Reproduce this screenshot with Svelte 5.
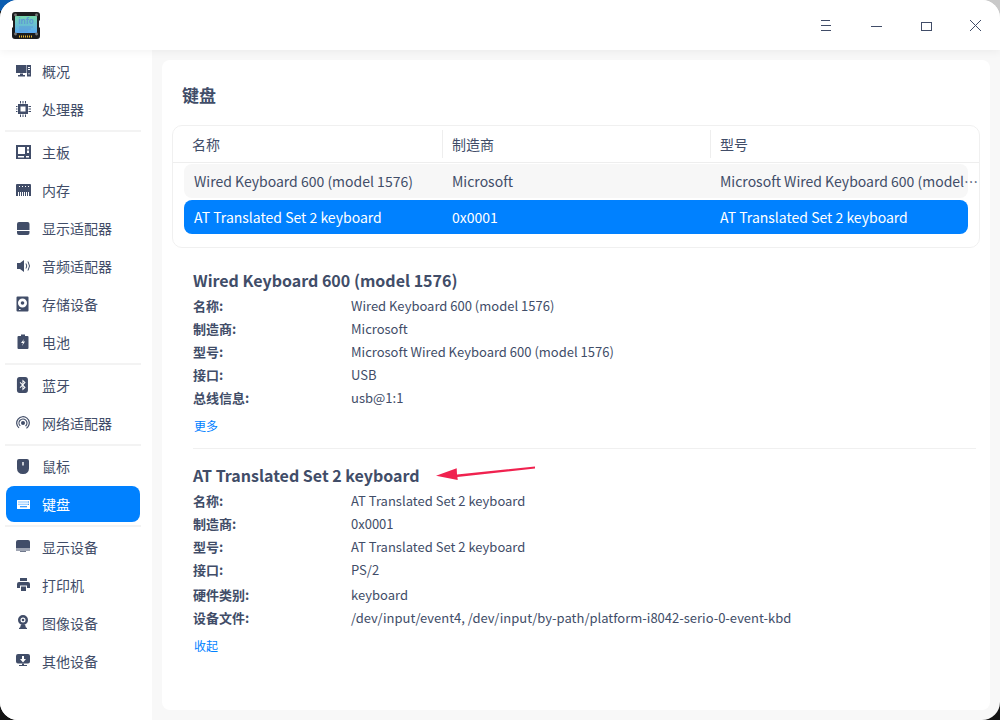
<script>
  const groups = [
    [['overview','概况'],['cpu','处理器']],
    [['board','主板'],['mem','内存'],['gpu','显示适配器'],['audio','音频适配器'],['disk','存储设备'],['battery','电池']],
    [['bt','蓝牙'],['net','网络适配器']],
    [['mouse','鼠标'],['kbd','键盘']],
    [['monitor','显示设备'],['printer','打印机'],['cam','图像设备'],['other','其他设备']]
  ];
  const rows = [
    ['Wired Keyboard 600 (model 1576)','Microsoft','Microsoft Wired Keyboard 600 (model 1576)'],
    ['AT Translated Set 2 keyboard','0x0001','AT Translated Set 2 keyboard']
  ];
  const devices = [
    { title:'Wired Keyboard 600 (model 1576)', link:'更多', fields:[
      ['名称:','Wired Keyboard 600 (model 1576)'],['制造商:','Microsoft'],['型号:','Microsoft Wired Keyboard 600 (model 1576)'],['接口:','USB'],['总线信息:','usb@1:1']]},
    { title:'AT Translated Set 2 keyboard', link:'收起', fields:[
      ['名称:','AT Translated Set 2 keyboard'],['制造商:','0x0001'],['型号:','AT Translated Set 2 keyboard'],['接口:','PS/2'],['硬件类别:','keyboard'],['设备文件:','/dev/input/event4, /dev/input/by-path/platform-i8042-serio-0-event-kbd']]}
  ];
</script>

<div class="desk">
  <div class="win">
    <header class="bar">
      <svg class="logo" width="28" height="28" viewBox="0 0 28 28">
        <defs><linearGradient id="lg" x1="0" y1="0" x2="0" y2="1"><stop offset="0" stop-color="#79d8ac"/><stop offset="1" stop-color="#5aa8f2"/></linearGradient></defs>
        <path d="M3 1h22a3 3 0 0 1 3 3v5l-1 1v6l1 1v8a3 3 0 0 1-3 3H3a3 3 0 0 1-3-3v-8l1-1v-6L0 9V4a3 3 0 0 1 3-3z" fill="#1c1c1e"/>
        <rect x="3" y="5" width="22" height="17" fill="url(#lg)"/>
        <circle cx="3.500" cy="4" r="1.400" fill="#777"/><circle cx="24.500" cy="4" r="1.400" fill="#777"/><circle cx="3.500" cy="23" r="1.400" fill="#777"/><circle cx="24.500" cy="23" r="1.400" fill="#777"/>
        <text x="14" y="13" text-anchor="middle" class="logotext">info</text>
        <path d="M7 16h14M7 18h12M7 20h9" stroke="#5d9ad6" stroke-width="1"/>
        <path d="M7 25.500h14" stroke="#e6b52e" stroke-width="2" stroke-dasharray="1 1"/>
      </svg>
      <div class="winbtns">
        <svg width="50" height="50" viewBox="0 0 50 50"><path d="M21 20.500h9M21 25.500h10M21 30.500h10" stroke="#414d68" stroke-width="1"/></svg>
        <svg width="50" height="50" viewBox="0 0 50 50"><path d="M21 26.500h11" stroke="#414d68" stroke-width="1"/></svg>
        <svg width="50" height="50" viewBox="0 0 50 50"><rect x="21.500" y="22.500" width="10" height="8" fill="none" stroke="#414d68" stroke-width="1"/></svg>
        <svg width="50" height="50" viewBox="0 0 50 50"><path d="M20 20l11 11M31 20l-11 11" stroke="#414d68" stroke-width="1"/></svg>
      </div>
    </header>
    <div class="main">
      <nav class="side">
        {#each groups as g, i}
          {#if i>0}<div class="sep"></div>{/if}
          {#each g as it}
            <div class="item" class:active={it[0]==='kbd'}>
              <svg class="ic" width="16" height="16" viewBox="0 0 16 16" fill="currentColor">
                {#if it[0]==='overview'}
                  <path fill-rule="evenodd" d="M0 2h10.500v8H0zM4 10.500h3V12H4zM2 12h7v1.500H2zM11 2h4v11.500h-4zM12 4v1h2V4zM12 6v1h2V6zM12.500 10v1.500h1V10z"/>
                {:else if it[0]==='cpu'}
                  <g transform="translate(-1 0)"><path fill-rule="evenodd" d="M3 3h10v10H3zM5.500 5.500v5h5v-5z"/><path d="M0 5h2.500v1H0zM0 7.500h2.500v1H0zM0 10h2.500v1H0zM13.500 5H16v1h-2.500zM13.500 7.500H16v1h-2.500zM13.500 10H16v1h-2.500zM5 0h1v2.500H5zM7.500 0h1v2.500h-1zM10 0h1v2.500h-1zM5 13.500h1V16H5zM7.500 13.500h1V16h-1zM10 13.500h1V16h-1z"/></g>
                {:else if it[0]==='board'}
                  <path fill-rule="evenodd" d="M0 1h15v14H0zM2 3v7h7V3zM11 3v2.500h2V3zM11 6.500V9h2V6.500zM2 12v1.500h6V12zM10 12v1.500h3V12z"/>
                {:else if it[0]==='mem'}
                  <path fill-rule="evenodd" d="M1 2h13a1 1 0 0 1 1 1v11H0V3a1 1 0 0 1 1-1zM3 4v1h1V4zM6 4v1h1V4zM9 4v1h1V4zM12 4v1h1V4zM2 10v4h1v-4zM4 10v4h1v-4zM6 10v4h1v-4zM8 10v4h1v-4zM10 10v4h1v-4zM12 10v4h1v-4z"/>
                {:else if it[0]==='gpu'}
                  <path d="M3 2h8.500a2 2 0 0 1 2 2v6H1V4a2 2 0 0 1 2-2zM1 11h12.500v2a2 2 0 0 1-2 2H3a2 2 0 0 1-2-2z"/>
                {:else if it[0]==='audio'}
                  <path d="M1 5h3l4-3v12l-4-3H1z"/><path d="M10 5.500q1.500 2.500 0 5M12 3.500q3 4.500 0 9" fill="none" stroke="currentColor" stroke-width="1"/>
                {:else if it[0]==='disk'}
                  <path fill-rule="evenodd" d="M1.500 0.500h10a1 1 0 0 1 1 1v13a1 1 0 0 1-1 1h-10a1 1 0 0 1-1-1v-13a1 1 0 0 1 1-1zM6.500 2.500a4.500 4.500 0 1 0 0 9 4.500 4.500 0 0 0 0-9zM3 13v1h1.500v-1z"/><circle cx="6.500" cy="7" r="1.800"/>
                {:else if it[0]==='battery'}
                  <path fill-rule="evenodd" d="M5 0.500h4V2h2.500a1 1 0 0 1 1 1v11a1 1 0 0 1-1 1h-9a1 1 0 0 1-1-1V3a1 1 0 0 1 1-1H5zM8 5L5 9h2l-1 3 3-4.500H7z"/>
                {:else if it[0]==='bt'}
                  <path fill-rule="evenodd" transform="scale(.92 1)" d="M4 0h6a3 3 0 0 1 3 3v10a3 3 0 0 1-3 3H4a3 3 0 0 1-3-3V3a3 3 0 0 1 3-3zM7 2.500V7L4.700 5 4 5.700 6.500 8 4 10.300l.7.700L7 9v4.500l3.500-3L8 8l2.500-2.500zM8 5V4.800L9 5.500 8 6.500zM8 9.500l1 1-1 .8z"/>
                {:else if it[0]==='net'}
                  <circle cx="7" cy="8" r="2"/><circle cx="7" cy="8" r="4" fill="none" stroke="currentColor" stroke-width="1.200" stroke-dasharray="19 6" transform="rotate(133 7 8)"/><circle cx="7" cy="8" r="6.300" fill="none" stroke="currentColor" stroke-width="1.200" stroke-dasharray="31 8.600" transform="rotate(129 7 8)"/>
                {:else if it[0]==='mouse'}
                  <path fill-rule="evenodd" d="M3 1h8a2 2 0 0 1 2 2v7.500a5.500 5.500 0 0 1-5.500 5.500h-1A5.500 5.500 0 0 1 1 10.500V3a2 2 0 0 1 2-2zM6.300 4v3.500h1.400V4z"/>
                {:else if it[0]==='kbd'}
                  <path fill-rule="evenodd" d="M1.500 4h12a.5.5 0 0 1 .5.5v8a.5.5 0 0 1-.5.5h-12a.5.5 0 0 1-.5-.5v-8a.5.5 0 0 1 .5-.5zM2.500 5.500v1h1v-1zM4.500 5.500v1h1v-1zM6.500 5.500v1h1v-1zM8.500 5.500v1h1v-1zM10.500 5.500v1h1v-1zM12 5.500v1h1v-1zM2.500 7.800v1h1v-1zM4.500 7.800v1h1v-1zM6.500 7.800v1h1v-1zM8.500 7.800v1h1v-1zM10.500 7.800v1h1v-1zM12 7.800v1h1v-1zM4 10.200v1h7v-1z"/>
                {:else if it[0]==='monitor'}
                  <path d="M2 1h10a2 2 0 0 1 2 2v6.500H0V3a2 2 0 0 1 2-2zM0 10.500h14v1H0zM4 12.200h6v.8H4z"/>
                {:else if it[0]==='printer'}
                  <path d="M4 1h7v3H4zM3 5h9a2 2 0 0 1 2 2v4h-3V8.500H4V11H1V7a2 2 0 0 1 2-2zM5 9.500h5V14H5z"/>
                {:else if it[0]==='cam'}
                  <path fill-rule="evenodd" d="M7 0a5 5 0 1 1 0 10A5 5 0 0 1 7 0zM7 2.500a2.500 2.500 0 1 0 0 5 2.500 2.500 0 0 0 0-5z"/><circle cx="7" cy="5" r="1.300"/><path d="M5 9.500h4l1 3.300H4zM3 12.800h8V14H3z"/>
                {:else}
                  <path fill-rule="evenodd" d="M2 1h10a2 2 0 0 1 2 2v5.500a2 2 0 0 1-2 2H2a2 2 0 0 1-2-2V3a2 2 0 0 1 2-2zM6 3v3H4l3 3.500L10 6H8V3z"/><path d="M6 10.500h2V12H6zM3 12h8v1H3z"/>
                {/if}
              </svg>
              <span>{it[1]}</span>
            </div>
          {/each}
        {/each}
      </nav>
      <section class="card">
        <h1>键盘</h1>
        <div class="table">
          <div class="thead">
            <div class="th first">名称</div>
            <div class="th">制造商</div>
            <div class="th">型号</div>
          </div>
          <div class="tbody">
            {#each rows as r, i}
              <div class="tr" class:sel={i===1}>
                {#each r as c, j}<div class="td" class:clip={j===2}>{c}</div>{/each}
              </div>
            {/each}
          </div>
        </div>
        <div class="details">
          {#each devices as d, i}
            <div class="device" class:second={i===1}>
              <h2>{d.title}</h2>
              {#each d.fields as f}
                <div class="field" class:tall={f[0]==='硬件类别:'}><b>{f[0]}</b><span>{f[1]}</span></div>
              {/each}
              <div class="link">{d.link}</div>
            </div>
          {/each}
        </div>
        <svg class="arrow" width="100" height="17" viewBox="0 0 100 17">
          <path d="M0 10.700L20.700 3.300 21 9.500 99 1.500V3.500L21.400 12 21.700 15z" fill="#f0224f"/>
        </svg>
      </section>
    </div>
  </div>
</div>

<style>
  :global(body) { margin: 0; background: #1a1a1a; }
  .desk {
    width: 1000px; height: 720px; overflow: hidden;
    background:
      radial-gradient(circle at 10px 0, #0a5cb0 0 14px, transparent 15px),
      radial-gradient(circle at 100% 0, #c9c9c9 0 26px, transparent 27px),
      #141414;
    font-family: "Noto Sans CJK SC", "Noto Sans", sans-serif;
    color: #414d68;
  }
  .win { width: 1000px; height: 720px; border-radius: 18px; background: #f8f8f8; overflow: hidden; display: flex; flex-direction: column; }
  .bar { position: relative; z-index: 1; height: 50px; flex: none; background: #fff; box-shadow: 0 2px 8px rgba(0,0,0,.05); display: flex; align-items: center; justify-content: space-between; padding-left: 12px; }
  .logo { display: block; }
  .logotext { font-size: 8px; fill: #5d9ad6; font-weight: 700; font-family: "Noto Sans", sans-serif; }
  .winbtns { display: flex; }
  .winbtns svg { display: block; }
  .main { flex: 1; display: flex; min-height: 0; }
  .side { width: 152px; flex: none; background: #fff; padding: 2px 12px 0 6px; box-sizing: border-box; }
  .sep { height: 2px; background: #f3f3f3; margin: 2px -1px 1px -1px; }
  .item { height: 38px; display: flex; align-items: center; padding-left: 10px; font-size: 14px; }
  .item span { margin-left: 10px; }
  .ic { flex: none; }
  .item.active { height: 36px; margin: 1px 0 3px; background: #0081ff; color: #fff; border-radius: 8px; }
  .card { position: relative; flex: 1; min-width: 0; background: #fff; margin: 10px; border-radius: 8px; padding: 0 10px; }
  h1 { margin: 0; padding: 22px 0 0 10px; height: 43px; font-size: 17px; line-height: 25px; font-weight: 700; box-sizing: content-box; }
  .table { border: 1px solid #f0f0f0; border-radius: 10px; height: 121px; box-sizing: content-box; }
  .thead { height: 36px; display: grid; grid-template-columns: 269px 268px 1fr; border-bottom: 1px solid #eee; align-items: center; font-size: 14px; }
  .th { height: 28px; line-height: 28px; padding-left: 9px; border-left: 1px solid #eee; }
  .th.first { border-left: 0; padding-left: 19px; }
  .tbody { padding: 1px 11px 0 11px; }
  .tr { height: 34px; border-radius: 8px; margin-bottom: 2px; background: #f7f7f7; display: grid; grid-template-columns: 258px 268px minmax(0, 1fr); align-items: center; font-size: 14px; }
  .tr.sel { background: #0081ff; color: #fff; }
  .td { padding-left: 10px; white-space: nowrap; }
  .clip { width: 270px; overflow: hidden; text-overflow: ellipsis; box-sizing: border-box; }
  .details { padding: 0 4px 0 21px; }
  .device { padding-top: 20px; }
  .device.second { margin-top: 13px; border-top: 1px solid #f0f0f0; padding-top: 14px; }
  h2 { margin: 0 0 2px; font-size: 16px; font-weight: 700; line-height: 24px; }
  .field { display: flex; height: 23px; line-height: 23px; font-size: 13px; }
  .field.tall { margin-top: 2px; }
  .field b { width: 158px; font-weight: 700; flex: none; }
  .link { font-size: 12px; color: #0081ff; padding: 8px 0 0 1px; line-height: 18px; }
  .arrow { position: absolute; left: 274px; top: 405px; }
</style>
